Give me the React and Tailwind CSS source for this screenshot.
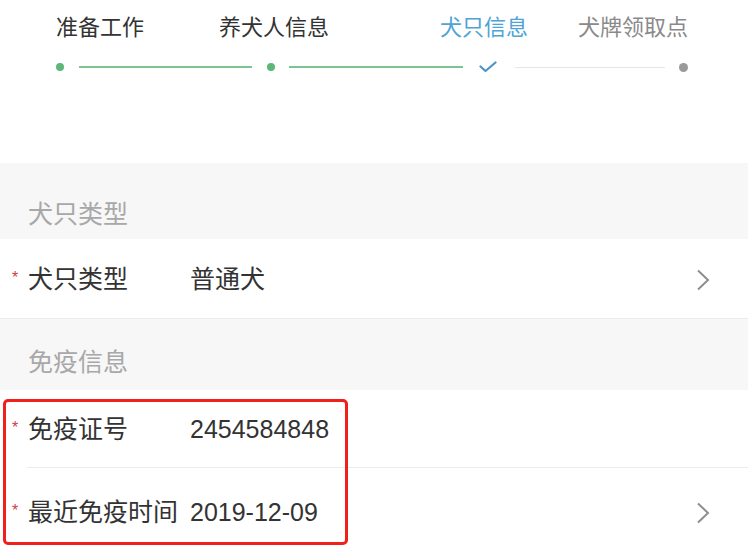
import React from 'react';

const font = { fontFamily: '"Liberation Sans", "Noto Sans CJK SC", sans-serif' };

function Chevron() {
  return (
    <svg width="14" height="22" viewBox="0 0 14 22" fill="none" className="mr-[38px]">
      <path d="M2 1.5 L12 11 L2 20.5" stroke="#8e8e8e" strokeWidth="2" strokeLinejoin="miter" />
    </svg>
  );
}

function Field({ label, value, arrow, border, height = 'h-[78px]' }) {
  return (
    <div className={`relative flex items-center pt-[2px] bg-white ${height}`}>
      <span className="w-[28px] pl-[12px] text-[16px] leading-none text-[#c9414b] -mt-[4px]">*</span>
      <span className="w-[162px] text-[25px] text-[#333]">{label}</span>
      <span className="flex-1 text-[25px] text-[#333]">{value}</span>
      {arrow && <Chevron />}
      {border && <div className="absolute bottom-0 left-[27px] right-0 h-px bg-[#ececec]" />}
    </div>
  );
}

export default function App() {
  return (
    <div className="relative w-[748px] h-[546px] overflow-hidden bg-white" style={font}>
      {/* Steps */}
      <div className="h-[163px] bg-white">
        <div className="flex pl-[56px] pt-[14px] text-[22px] leading-[28px]">
          <span className="w-[163px] text-[#333]">准备工作</span>
          <span className="w-[221px] text-[#333]">养犬人信息</span>
          <span className="w-[138px] text-[#4fa3d6]">犬只信息</span>
          <span className="text-[#8a8a8a]">犬牌领取点</span>
        </div>
        <div className="flex items-center pl-[56px] mt-[19px] h-[12px]">
          <span className="w-2 h-2 rounded-full bg-[#5cb877]" />
          <span className="ml-[15px] w-[173px] h-[2px] bg-[#7cc592]" />
          <span className="ml-[15px] w-2 h-2 rounded-full bg-[#5cb877]" />
          <span className="ml-[14px] w-[174px] h-[2px] bg-[#7cc592]" />
          <svg className="ml-[16px]" width="18" height="12" viewBox="0 0 18 12" fill="none">
            <path d="M1.5 5.5 L6.5 10 L16.5 1.5" stroke="#4d93c7" strokeWidth="2.2" strokeLinecap="round" strokeLinejoin="round" />
          </svg>
          <span className="ml-[18px] w-[150px] h-px bg-[#e6e6e6]" />
          <span className="ml-[14px] w-[9px] h-[9px] rounded-full bg-[#9a9a9a]" />
        </div>
      </div>

      {/* 犬只类型 */}
      <div className="flex items-end h-[76px] pb-[12px] pl-[28px] bg-[#f7f7f7] text-[25px] leading-[25px] text-[#a8a8a8]">犬只类型</div>
      <Field label="犬只类型" value="普通犬" arrow height="h-[79px]" />
      <div className="h-px bg-[#ececec]" />

      {/* 免疫信息 */}
      <div className="flex items-end h-[71px] pb-[15px] pl-[28px] bg-[#f7f7f7] text-[25px] leading-[25px] text-[#a8a8a8]">免疫信息</div>
      <Field label="免疫证号" value="2454584848" border />
      <Field label="最近免疫时间" value="2019-12-09" arrow height="h-[88px]" />

      {/* annotation box */}
      <div className="absolute left-[3px] top-[399px] w-[345px] h-[146px] border-[3px] border-[#f0201a] rounded-[5px]" />
    </div>
  );
}
